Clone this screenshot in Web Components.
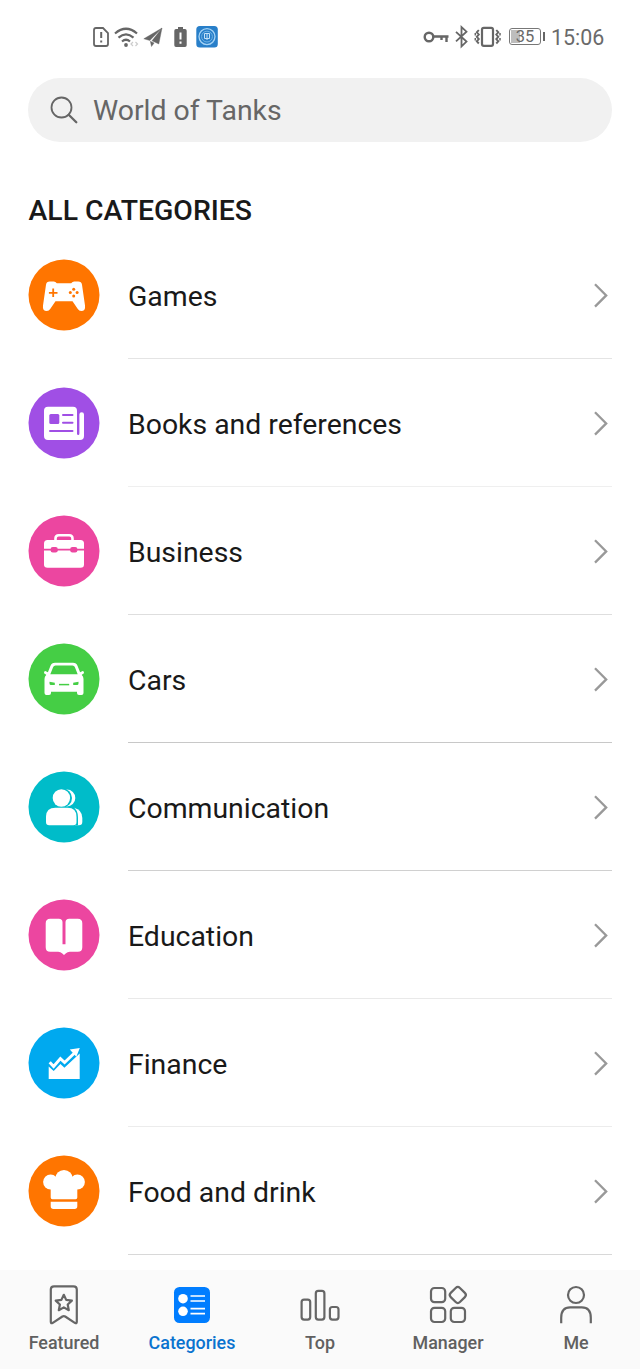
<!DOCTYPE html>
<html lang="en">
<head>
<meta charset="utf-8">
<title>Categories</title>
<style>
html,body{margin:0;background:#fff}
body{font-family:Roboto,"Noto Sans",sans-serif;color:#191919}
</style>
</head>
<body>
<store-app></store-app>
<script>
const define = (name, html) => customElements.define(name, class extends HTMLElement {
  connectedCallback() {
    if (this.shadowRoot) return;
    const t = document.createElement('template');
    t.innerHTML = typeof html === 'function' ? html(this) : html;
    this.attachShadow({mode: 'open'}).append(t.content.cloneNode(true));
  }
});

/* Category glyphs, drawn on a 72x72 grid; var(--c) is the disc colour. */
const glyphs = {
  games: `<path d="M21.800 22.600h4q1.800 0 3 1.700h14.400q1.200-1.700 3-1.700h4q3.300 0 3.800 3.200L57 46.500q.7 5.600-3.800 5.600-2.200 0-3.400-2l-5.300-7.800h-17l-5.300 7.800q-1.200 2-3.400 2-4.500 0-3.800-5.600L18 25.800q.5-3.200 3.800-3.200z"/><path d="M25.200 29.500v8.600M20.900 33.800h8.600" stroke="var(--c)" stroke-width="1.800"/><g fill="var(--c)"><circle cx="45.700" cy="30.300" r="1.500"/><circle cx="45.700" cy="37" r="1.500"/><circle cx="42.300" cy="33.600" r="1.500"/><circle cx="49.100" cy="33.600" r="1.500"/></g>`,
  books: `<path d="M20 19.800h25q4 0 4 4V46.500q0 1.500 1.200 1.500t1.200-1.500V27.500q0-2.300 2.300-2.300t2.300 2.300V49q0 4-4 4H20q-4 0-4-4V23.800q0-4 4-4z"/><rect x="21.300" y="27" width="10" height="10" rx="1.500" fill="var(--c)"/><path d="M35 28h9.500M35 35.800h9.500M22 44h22.500" stroke="var(--c)" stroke-width="2" stroke-linecap="round"/>`,
  business: `<path d="M27.500 27v-3.500q0-3.300 3.300-3.300h10.400q3.300 0 3.300 3.300V27" fill="none" stroke="#fff" stroke-width="2.600"/><path d="M19.500 25h33q3.500 0 3.500 3.500v21q0 3.300-3.500 3.300h-33q-3.500 0-3.500-3.300v-21q0-3.500 3.500-3.500z"/><path d="M16 34.700h40" stroke="var(--c)" stroke-width="1.800"/><g fill="var(--c)"><rect x="22.600" y="32" width="7.200" height="5.400" rx="2.200"/><rect x="42.200" y="32" width="7.200" height="5.400" rx="2.200"/></g>`,
  cars: `<path d="M27 19.800h18q3.400 0 4.600 3.200l2.500 6.300 2.600-1.300q1.300 0 1.300 1.600t-2 1.900l-.2.500q1.700 1.600 1.700 4V50q0 2-2 2h-2.500q-2 0-2-2v-1.300H23V50q0 2-2 2h-2.500q-2 0-2-2V36q0-2.400 1.700-4l-.2-.5q-2-.3-2-1.900t1.300-1.600l2.600 1.300 2.500-6.300q1.200-3.200 4.600-3.200z"/><path d="M27.500 22.500h17q1.700 0 2.300 1.500l2.900 7.300H22.300l2.900-7.300q.6-1.500 2.300-1.500z" fill="var(--c)"/><path d="M21.500 38.800l5.300 1v2.300h-3.800q-1.500 0-1.500-1.500zM50.500 38.800l-5.300 1v2.300H49q1.500 0 1.500-1.500z" fill="var(--c)"/><path d="M31 41.600h10.200" stroke="var(--c)" stroke-width="1.500"/>`,
  communication: `<circle cx="38.800" cy="27" r="8.500"/><circle cx="34.300" cy="27" r="9.700" fill="var(--c)"/><circle cx="33.400" cy="27" r="8.700"/><path d="M46 36.800q8.200 2 8.300 10.200v4q0 3.200-3.500 3.200h-4z"/><path d="M44 35q6 3.500 6 11.500v7.800H43z" fill="var(--c)"/><path d="M27.500 36.700h12q9 0 9 9V51q0 3.200-3.200 3.200H21.200Q18 54.200 18 51v-5.300q0-9 9.500-9z"/>`,
  education: `<path d="M22.200 19.700h8.600q3.700 0 3.700 3.500v22h3v-22q0-3.500 3.700-3.500h8.600q4.500 0 4.500 4.500v24q0 4.500-4.500 4.500h-8q-2.500 0-3.800 1.500l-2 1.700-2-1.700q-1.300-1.500-3.800-1.500h-8q-4.500 0-4.500-4.500v-24q0-4.500 4.500-4.500z"/>`,
  finance: `<path d="M20.700 39.500l5 4.500 6.700-7 4 3.700L51.700 26.500V52h-31z"/><path d="M21.700 35.200l3.900 4.200 6.800-7.800 4.200 3.900L47.500 25" fill="none" stroke="#fff" stroke-width="3"/><path d="M41.800 22.400l10-1.500-3.500 8.900z"/>`,
  food: `<circle cx="22.600" cy="27" r="7.500"/><circle cx="49.400" cy="27" r="7.500"/><circle cx="36" cy="23.800" r="8.800"/><path d="M22.700 25h26.600v17.500q0 1.700-1.700 1.700H24.400q-1.700 0-1.700-1.700zM22.700 46.700h26.600v4.500q0 2.700-2.700 2.700H25.400q-2.700 0-2.700-2.700z"/>`
};

/* Tab glyphs on a 48x48 grid. */
const tabs = {
  featured: `<path d="M14 5.300h19.500q3.300 0 3.300 3.300v32.200q0 2.200-2 1l-9.600-6.300q-1.400-.8-2.800 0l-9.600 6.300q-2 1.200-2-1V8.600q0-3.300 3.200-3.300z"/><path d="M23.800 13.800l2.400 5.100 5.700.7-4.200 3.900 1.100 5.700-5-2.800-5 2.800 1.100-5.700-4.200-3.900 5.700-.7z"/>`,
  categories: `<rect x="6" y="6" width="36" height="36" rx="5.500" fill="#007dff" stroke="none"/><g fill="#fff" stroke="none"><circle cx="15" cy="17.700" r="4.800"/><circle cx="15" cy="30.300" r="4.800"/></g><path d="M22.500 15H37M22.500 20H37M22.500 27.700H37M22.500 32.700H37" stroke="#fff" stroke-width="1.700"/>`,
  top: `<rect x="5.600" y="18.600" width="8.600" height="20" rx="2.500"/><rect x="19.800" y="9.900" width="8.600" height="28.700" rx="2.500"/><rect x="33.900" y="26" width="8.600" height="12.600" rx="2.500"/>`,
  manager: `<rect x="7" y="7" width="14.200" height="14.200" rx="3.500"/><rect x="7" y="26.800" width="14.200" height="14.200" rx="3.500"/><rect x="26.800" y="26.800" width="14.200" height="14.200" rx="3.500"/><rect x="27.300" y="7.500" width="13" height="13" rx="3" transform="rotate(45 33.800 14)"/>`,
  me: `<circle cx="24" cy="14" r="8"/><path d="M9.200 42.300v-5.600q0-10.400 9-10.400h11.600q9 0 9 10.400v5.600"/>`
};

define('status-bar', `
<style>
:host{display:flex;height:78px;box-sizing:border-box;padding:24px 0 0 90px;color:#6a6a6a}
svg{display:block;flex:none}
.right{display:flex;margin-left:202px}
.battery{box-sizing:border-box;width:32px;height:17px;margin:4px 0 0 7px;border:1px solid #777;border-radius:3px;background:linear-gradient(90deg,#bdbdbd 9px,transparent 9px) 1px 1px/28px 13px no-repeat;font-size:16.500px;line-height:16px;text-align:center}
.cap{width:2px;height:9px;margin:8px 0 0 1.500px;background:#666}
time{margin-left:6.500px;font-size:21.400px;line-height:28px;width:56px;white-space:nowrap}
</style>
<svg width="130" height="26" fill="none" stroke="#666" stroke-width="1.800">
 <path d="M6 4h7l5 5v11q0 2-2 2H6q-2 0-2-2V6q0-2 2-2z"/><path d="M11.200 8v6M11.200 16.400v2" stroke-width="2"/>
 <path d="M25 9.500q11-9.500 22 0M28.500 13.600q7.500-6.500 15 0M32 17.500q4-3.500 8 0" stroke-width="2.200"/><circle cx="36" cy="21" r="1.900" fill="#666" stroke="none"/>
 <path d="M43 18l-2 2 2 2M45.500 18l2 2-2 2" stroke="#ccc" stroke-width="1.200"/>
 <path d="M72 4L53.800 14.800l6 1.700zM72 4L62 16.800l6.800 3.200zM60.300 17.200l1.200 5.300 2.600-3.500z" fill="#666" stroke="#666" stroke-width=".4"/>
 <path d="M88 3h5v2h2q1.700 0 1.700 1.700v14.600q0 1.700-1.700 1.700h-9q-1.700 0-1.700-1.700V6.700Q84.300 5 86 5h2z" fill="#666" stroke="none"/><path d="M90.500 8.500v7M90.500 17.500v2.300" stroke="#fff" stroke-width="2"/>
 <rect x="106.300" y="2" width="21.500" height="21.500" rx="3.500" fill="#287fc9" stroke="none"/><circle cx="117" cy="12.600" r="8" stroke="#a5d3f5" stroke-width="1.300"/><circle cx="117" cy="12.600" r="5.400" stroke="#70b3e6" stroke-width="1"/><path d="M114.500 9.500h5v5h-5zM117 9v7" stroke="#c4e3f9" stroke-width="1"/>
</svg>
<div class="right">
<svg width="80" height="26" fill="none" stroke="#666" stroke-width="2">
 <circle cx="7" cy="13" r="4.300" stroke-width="2.400"/><path d="M11.500 12.500h15M24.500 12.500v5.500M19.500 12.500v3.500" stroke-width="2.400"/>
 <path d="M34 7.800l10.500 9.800-5 4.700V3l5 4.700L34 17.400" stroke-width="1.800"/>
 <rect x="60" y="3.800" width="11" height="18" rx="1.800" stroke-width="2.200"/>
 <path d="M56.800 6l-2 2.300 2 2.200-2 2.300 2 2.200-2 2.300 2 2.200M74.300 6l2 2.300-2 2.200 2 2.300-2 2.200 2 2.300-2 2.200" stroke-width="1.900"/><path d="M53.300 9v2.500M53.300 14v2.500M78 9v2.500M78 14v2.500" stroke-width="1.500"/>
</svg>
<div class="battery">35</div><div class="cap"></div><time>15:06</time>
</div>`);

define('search-field', `
<style>
:host{display:flex;align-items:center;height:64px;margin:0 28px;border-radius:32px;background:#f1f1f1;color:#666;font-size:28.400px;line-height:34px}
svg{display:block;margin:0 14px 0 21px}
span{padding-top:2px;white-space:nowrap}
</style>
<svg width="30" height="30" fill="none" stroke="#666" stroke-linecap="round"><circle cx="12.500" cy="12.500" r="10" stroke-width="1.800"/><path d="M19.700 19.700l7.600 7.600" stroke-width="2.300"/></svg>
<span><slot></slot></span>`);

define('section-title', `
<style>:host{display:block;box-sizing:border-box;height:89px;padding:52px 28.500px 0;font-size:28.400px;line-height:34px;font-weight:500;white-space:nowrap}</style><slot></slot>`);

define('category-row', el => `
<style>
:host{display:flex;height:128px;padding:0 28px;--c:${el.getAttribute('color')}}
.disc{width:72px;height:72px;margin-top:28px;display:block;flex:none}
.body{flex:1;margin-left:28px;display:flex;align-items:center;justify-content:space-between;border-bottom:1px solid ${el.getAttribute('line')};box-sizing:border-box;font-size:28.400px;line-height:34px;white-space:nowrap}
.label{padding-top:4px}
.arrow{display:block;margin-right:3px}
</style>
<svg class="disc" viewBox="0 0 72 72" fill="#fff"><circle cx="36" cy="36" r="35.500" fill="var(--c)"/>${glyphs[el.getAttribute('icon')]}</svg>
<div class="body"><span class="label"><slot></slot></span>
<svg class="arrow" width="16" height="26" fill="none" stroke="#999" stroke-width="2.300"><path d="M2 2.200l11.200 11.200L2 24.600"/></svg></div>`);

define('tab-item', el => `
<style>
:host{display:flex;flex:1;flex-direction:column;align-items:center;padding-top:11px;color:${el.hasAttribute('active') ? '#0a73cf' : '#606060'};font-size:17.900px;font-weight:500;line-height:22px}
svg{display:block}
.label{margin-top:3px}
</style>
<svg width="48" height="48" fill="none" stroke="#666" stroke-width="2.200" stroke-linejoin="round">${tabs[el.getAttribute('icon')]}</svg>
<span class="label"><slot></slot></span>`);

define('tab-bar', `<style>:host{display:flex;height:99px;background:#fafafa}</style><slot></slot>`);

define('store-app', `
<style>
:host{display:flex;flex-direction:column;width:640px;height:1369px;background:#fff;overflow:hidden}
main{flex:1;min-height:0}
</style>
<status-bar></status-bar>
<search-field>World of Tanks</search-field>
<section-title>ALL CATEGORIES</section-title>
<main>
<category-row icon="games" color="#ff7500" line="#e4e4e4">Games</category-row>
<category-row icon="books" color="#a04fe5" line="#efefef">Books and references</category-row>
<category-row icon="business" color="#ec46a0" line="#dedede">Business</category-row>
<category-row icon="cars" color="#45ce45" line="#c8c8c8">Cars</category-row>
<category-row icon="communication" color="#00bcc9" line="#d0d0d0">Communication</category-row>
<category-row icon="education" color="#ec46a0" line="#e9e9e9">Education</category-row>
<category-row icon="finance" color="#00a9ef" line="#ececec">Finance</category-row>
<category-row icon="food" color="#ff7500" line="#d8d8d8">Food and drink</category-row>
</main>
<tab-bar>
<tab-item icon="featured">Featured</tab-item>
<tab-item icon="categories" active>Categories</tab-item>
<tab-item icon="top">Top</tab-item>
<tab-item icon="manager">Manager</tab-item>
<tab-item icon="me">Me</tab-item>
</tab-bar>`);
</script>
</body>
</html>
